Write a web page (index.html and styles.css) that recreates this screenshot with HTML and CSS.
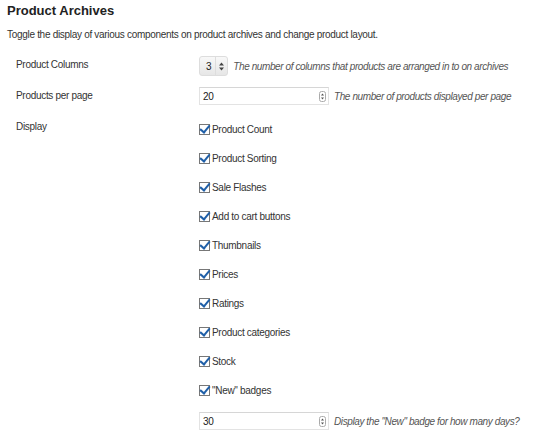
FILE: index.html
```html
<!DOCTYPE html>
<html lang="en">
<head>
    <meta charset="UTF-8">
    <title>Product Archives</title>
    <link rel="stylesheet" href="styles.css">
</head>
<body>
    <h3 class="section-title">Product Archives</h3>
    <p class="section-desc">Toggle the display of various components on product archives and change product layout.</p>

    <div class="form-table">
        <div class="row row-columns">
            <div class="label">Product Columns</div>
            <div class="field">
                <span class="select">3 <span class="updown"><svg width="5" height="9" viewBox="0 0 5 9"><path d="M0 3.5 L2.5 0.5 L5 3.5 Z M0 5.5 L2.5 8.5 L5 5.5 Z" fill="#444"/></svg></span></span>
                <span class="hint">The number of columns that products are arranged in to on archives</span>
            </div>
        </div>

        <div class="row row-perpage">
            <div class="label">Products per page</div>
            <div class="field">
                <span class="number">20<span class="spin"><svg width="7" height="11" viewBox="0 0 7 11"><rect x="0.5" y="0.5" width="6" height="10" rx="2" fill="#fff" stroke="#aaa"/><path d="M2 4.5 L3.5 2.5 L5 4.5 Z M2 6.5 L3.5 8.5 L5 6.5 Z" fill="#555"/></svg></span></span>
                <span class="hint">The number of products displayed per page</span>
            </div>
        </div>

        <div class="row row-display">
            <div class="label">Display</div>
            <div class="field checks">
                <label class="check"><span class="box"></span>Product Count</label>
                <label class="check"><span class="box"></span>Product Sorting</label>
                <label class="check"><span class="box"></span>Sale Flashes</label>
                <label class="check"><span class="box"></span>Add to cart buttons</label>
                <label class="check"><span class="box"></span>Thumbnails</label>
                <label class="check"><span class="box"></span>Prices</label>
                <label class="check"><span class="box"></span>Ratings</label>
                <label class="check"><span class="box"></span>Product categories</label>
                <label class="check"><span class="box"></span>Stock</label>
                <label class="check"><span class="box"></span>"New" badges</label>
                <div class="field new-days">
                    <span class="number">30<span class="spin"><svg width="7" height="11" viewBox="0 0 7 11"><rect x="0.5" y="0.5" width="6" height="10" rx="2" fill="#fff" stroke="#aaa"/><path d="M2 4.5 L3.5 2.5 L5 4.5 Z M2 6.5 L3.5 8.5 L5 6.5 Z" fill="#555"/></svg></span></span>
                    <span class="hint">Display the "New" badge for how many days?</span>
                </div>
            </div>
        </div>
    </div>
</body>
</html>
```

FILE: styles.css
```css
body {
    margin: 0;
    padding: 0 7px;
    background: #ffffff;
    color: #333333;
    font-family: "Liberation Sans", Arial, sans-serif;
    font-size: 10px;
    letter-spacing: -0.3px;
}
.section-title {
    margin: 3px 0 0;
    font-size: 13px;
    line-height: 16px;
    font-weight: bold;
    letter-spacing: 0;
    color: #222222;
}
.section-desc {
    margin: 9px 0 0;
    line-height: 14px;
}
.form-table {
    margin-top: 14px;
    padding-left: 9px;
}
.row {
    display: grid;
    grid-template-columns: 183px 1fr;
    align-items: start;
}
.label {
    line-height: 14px;
}
.row-columns .label {
    padding-top: 2px;
}
.row-perpage {
    margin-top: 11px;
}
.row-perpage .label {
    padding-top: 2px;
}
.row-display {
    margin-top: 15px;
}
.field {
    display: flex;
    align-items: center;
    gap: 5px;
}
.hint {
    font-style: italic;
    color: #555555;
    white-space: nowrap;
    letter-spacing: -0.4px;
}
.select {
    display: inline-flex;
    align-items: center;
    gap: 4px;
    height: 20px;
    padding: 0 3px 0 6px;
    box-sizing: border-box;
    border: 1px solid #dddddd;
    border-radius: 3px;
    background: linear-gradient(#f8f8f8, #e6e6e6);
    color: #222222;
    font-size: 10px;
}
.updown {
    display: inline-flex;
    align-items: center;
    height: 18px;
    padding-left: 3px;
    border-left: 1px solid #dddddd;
}
.number {
    display: inline-flex;
    align-items: center;
    justify-content: space-between;
    width: 130px;
    height: 18px;
    box-sizing: border-box;
    padding: 0 2px 0 3px;
    border: 1px solid #e3e3e3;
    border-top-color: #d6d6d6;
    color: #222222;
}
.spin {
    display: inline-flex;
}
.checks {
    flex-direction: column;
    align-items: flex-start;
    gap: 0;
}
.check {
    display: flex;
    align-items: center;
    height: 29px;
    margin-top: -9px;
    margin-bottom: 9px;
}
.check:first-child {
    margin-top: -5px;
}
.box {
    position: relative;
    width: 9px;
    height: 9px;
    margin-right: 2px;
    border: 1px solid #777777;
    background: #ffffff;
}
.box::after {
    content: "";
    position: absolute;
    left: 2px;
    top: -2px;
    width: 4px;
    height: 8px;
    border: solid #1f5fa8;
    border-width: 0 2px 2px 0;
    transform: rotate(40deg);
}
.new-days {
    margin-top: -2px;
}
```
